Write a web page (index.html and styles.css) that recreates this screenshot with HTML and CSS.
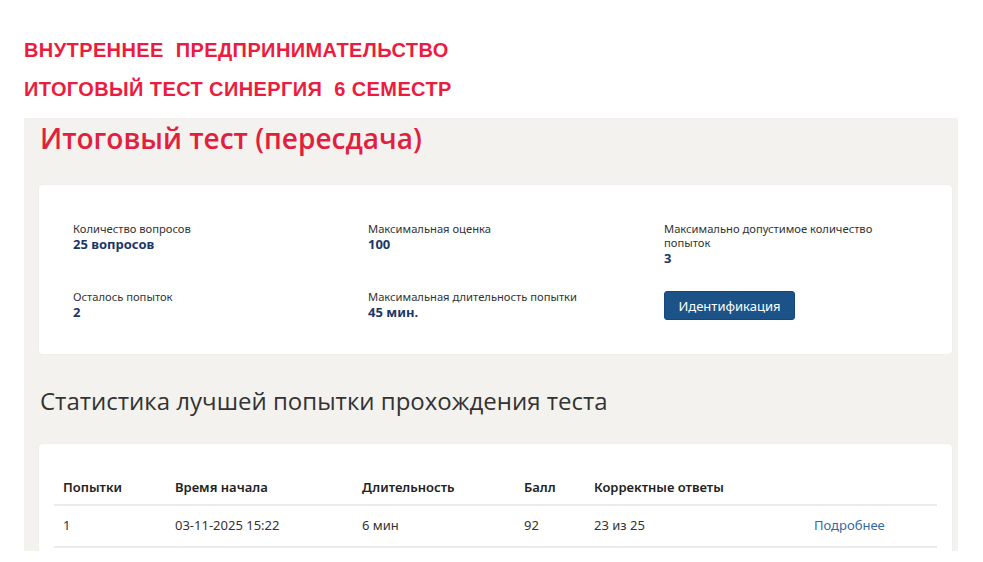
FILE: index.html
```html
<!DOCTYPE html>
<html lang="ru">
<head>
  <meta charset="UTF-8">
  <meta name="viewport" content="width=device-width, initial-scale=1.0">
  <title>Итоговый тест</title>
  <link rel="stylesheet" href="styles.css">
</head>
<body>
  <div class="promo">
    <p class="promo-line">ВНУТРЕННЕЕ  ПРЕДПРИНИМАТЕЛЬСТВО</p>
    <p class="promo-line">ИТОГОВЫЙ ТЕСТ СИНЕРГИЯ  6 СЕМЕСТР</p>
  </div>

  <div class="panel">
    <h1 class="test-title">Итоговый тест (пересдача)</h1>

    <div class="card info">
      <div class="info-item">
        <div class="label">Количество вопросов</div>
        <div class="value">25 вопросов</div>
      </div>
      <div class="info-item">
        <div class="label">Максимальная оценка</div>
        <div class="value">100</div>
      </div>
      <div class="info-item">
        <div class="label">Максимально допустимое количество<br>попыток</div>
        <div class="value">3</div>
      </div>
      <div class="info-item">
        <div class="label">Осталось попыток</div>
        <div class="value">2</div>
      </div>
      <div class="info-item">
        <div class="label">Максимальная длительность попытки</div>
        <div class="value">45 мин.</div>
      </div>
      <div class="info-item">
        <button class="btn">Идентификация</button>
      </div>
    </div>

    <h2 class="stats-title">Статистика лучшей попытки прохождения теста</h2>

    <div class="card stats">
      <table class="attempts">
        <thead>
          <tr>
            <th class="c1">Попытки</th>
            <th class="c2">Время начала</th>
            <th class="c3">Длительность</th>
            <th class="c4">Балл</th>
            <th class="c5">Корректные ответы</th>
            <th></th>
          </tr>
        </thead>
        <tbody>
          <tr>
            <td>1</td>
            <td>03-11-2025 15:22</td>
            <td>6 мин</td>
            <td>92</td>
            <td>23 из 25</td>
            <td><a href="#" class="more">Подробнее</a></td>
          </tr>
        </tbody>
      </table>
    </div>
  </div>
</body>
</html>
```

FILE: styles.css
```css
body {
  margin: 0;
  background: #fff;
  font-family: "Noto Sans", "Open Sans", sans-serif;
  color: #333;
}

.promo {
  padding: 39px 0 1px 24px;
}
.promo-line {
  margin: 0 0 17px;
  font-family: "Liberation Sans", Arial, sans-serif;
  font-weight: bold;
  font-size: 20px;
  line-height: 22px;
  letter-spacing: 0.4px;
  color: #ec1c3e;
  white-space: pre;
}

.panel {
  margin-left: 24px;
  width: 934px;
  height: 433px;
  box-sizing: border-box;
  padding: 0 6px 0 15px;
  background: #f3f2ef;
  overflow: hidden;
}

.test-title {
  margin: 0;
  padding: 1px 0 0 1px;
  height: 66px;
  font-family: "Open Sans", "Noto Sans", sans-serif;
  font-weight: 600;
  font-size: 28px;
  line-height: 38px;
  color: #e2203d;
}

.card {
  background: #fff;
  border-radius: 4px;
  box-shadow: 0 0 2px rgba(0,0,0,.06);
}

.info {
  display: grid;
  grid-template-columns: 295px 296px 1fr;
  row-gap: 20px;
  padding: 37px 20px 30px 34px;
  height: 169px;
  box-sizing: border-box;
}
.info-item .label {
  font-size: 11.2px;
  line-height: 14px;
  color: #333;
}
.info-item .value {
  font-size: 13px;
  line-height: 17px;
  font-weight: bold;
  color: #1c3766;
}
.btn {
  display: block;
  margin-top: 1px;
  width: 131px;
  height: 29px;
  border: 1px solid #15477a;
  border-radius: 3px;
  background: #1b5288;
  color: #fff;
  font-family: inherit;
  font-size: 13px;
  cursor: pointer;
}

.stats-title {
  margin: 0;
  padding: 29px 0 0 1px;
  height: 61px;
  font-family: "Open Sans", "Noto Sans", sans-serif;
  font-weight: normal;
  font-size: 24px;
  line-height: 36px;
  color: #333;
}

.stats {
  padding: 35px 15px 20px;
}
.attempts {
  width: 100%;
  border-collapse: collapse;
  font-size: 13px;
  color: #333;
}
.attempts th {
  text-align: left;
  font-weight: 600;
  color: #222;
  padding: 0 9px 8px;
  line-height: 17px;
  border-bottom: 2px solid #ebebeb;
}
.attempts td {
  padding: 11px 9px 12px;
  line-height: 17px;
  border-bottom: 2px solid #ebebeb;
}
.attempts .c1 { width: 94px; }
.attempts .c2 { width: 169px; }
.attempts .c3 { width: 144px; }
.attempts .c4 { width: 52px; }
.attempts .c5 { width: 202px; }
.more {
  color: #2f6ba3;
  text-decoration: none;
}
```
